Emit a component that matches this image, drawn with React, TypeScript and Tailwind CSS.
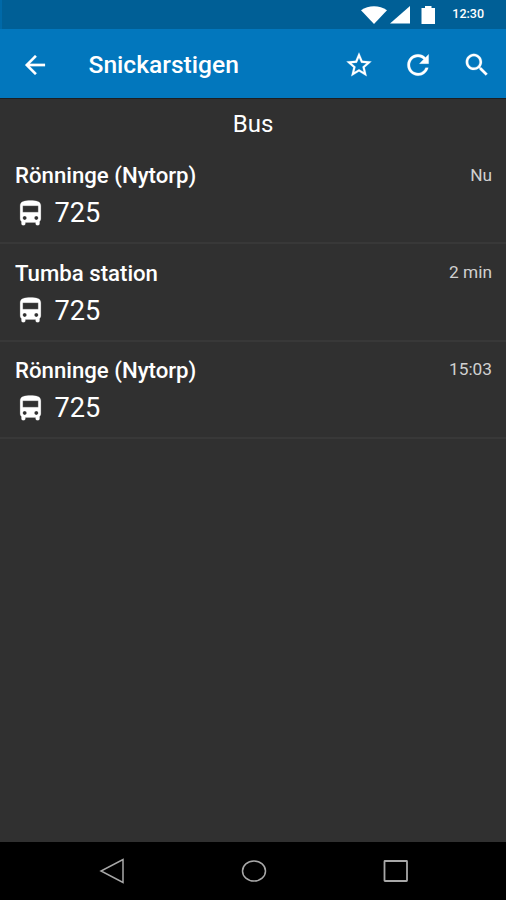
interface Departure {
  id: number;
  destination: string;
  line: string;
  time: string;
}

const departures: Departure[] = [
  { id: 1, destination: "Rönninge (Nytorp)", line: "725", time: "Nu" },
  { id: 2, destination: "Tumba station", line: "725", time: "2 min" },
  { id: 3, destination: "Rönninge (Nytorp)", line: "725", time: "15:03" },
];

const icons = {
  back: "M20 11H7.83l5.59-5.59L12 4l-8 8 8 8 1.41-1.41L7.83 13H20v-2z",
  star: "M22 9.24l-7.19-.62L12 2 9.19 8.63 2 9.24l5.46 4.73L5.82 21 12 17.27 18.18 21l-1.63-7.03L22 9.24zM12 15.4l-3.76 2.27 1-4.28-3.32-2.88 4.38-.38L12 6.1l1.71 4.04 4.38.38-3.32 2.88 1 4.28L12 15.4z",
  refresh:
    "M17.65 6.35C16.2 4.9 14.21 4 12 4c-4.42 0-7.99 3.58-7.99 8s3.57 8 7.99 8c3.73 0 6.84-2.55 7.73-6h-2.08c-.82 2.33-3.04 4-5.65 4-3.31 0-6-2.69-6-6s2.69-6 6-6c1.66 0 3.14.69 4.22 1.78L13 11h7V4l-2.35 2.35z",
  search:
    "M15.5 14h-.79l-.28-.27C15.41 12.59 16 11.11 16 9.5 16 5.91 13.09 3 9.5 3S3 5.91 3 9.5 5.91 16 9.5 16c1.61 0 3.09-.59 4.23-1.57l.27.28v.79l5 4.99L20.49 19l-4.99-5zm-6 0C7.01 14 5 11.99 5 9.5S7.01 5 9.5 5 14 7.01 14 9.5 11.99 14 9.5 14z",
  bus: "M4 16c0 .88.39 1.67 1 2.22V20c0 .55.45 1 1 1h1c.55 0 1-.45 1-1v-1h8v1c0 .55.45 1 1 1h1c.55 0 1-.45 1-1v-1.78c.61-.55 1-1.34 1-2.22V6c0-3.5-3.58-4-8-4s-8 .5-8 4v10zm3.5 1c-.83 0-1.5-.67-1.5-1.5S6.67 14 7.5 14s1.5.67 1.5 1.5S8.33 17 7.5 17zm9 0c-.83 0-1.5-.67-1.5-1.5s.67-1.5 1.5-1.5 1.5.67 1.5 1.5-.67 1.5-1.5 1.5zm1.5-6H6V6h12v5z",
};

export default function App() {
  return (
    <div className="flex h-[900px] w-[506px] flex-col overflow-hidden bg-[#303030] font-['Roboto',sans-serif] text-white">
      <StatusBar />
      <AppBar title="Snickarstigen" />
      <main className="flex-1">
        <h2 className="flex h-[48px] items-center justify-center pt-[2px] text-[24px] leading-none">
          Bus
        </h2>
        <ul>
          {departures.map((d) => (
            <DepartureRow key={d.id} departure={d} />
          ))}
        </ul>
      </main>
      <NavigationBar />
    </div>
  );
}

function Icon({ name, className }: { name: keyof typeof icons; className: string }) {
  return (
    <svg
      viewBox="0 0 24 24"
      fill="currentColor"
      stroke="currentColor"
      strokeWidth="0.15"
      className={className}
    >
      <path d={icons[name]} />
    </svg>
  );
}

function StatusBar() {
  return (
    <div className="flex h-[29px] shrink-0 items-center justify-end border-l-2 border-[#0069a8] bg-[#005f96] pr-[22px]">
      <svg viewBox="0 0 76 18" fill="currentColor" className="mr-[15px] h-[18px] w-[76px]">
        {/* wifi */}
        <path d="M0 4.2C7.5-1 18.5-1 26 4.2L13 18z" />
        {/* signal */}
        <path d="M49 0v17.5H29z" />
        {/* battery */}
        <path d="M60.5 2H64V0h6.5v2H74v16H60.5z" />
      </svg>
      <span className="text-[12.5px] font-medium leading-none">12:30</span>
    </div>
  );
}

function AppBar({ title }: { title: string }) {
  return (
    <header className="flex h-[70px] shrink-0 items-center border-b border-[#1c1f22] bg-[#0277bd] pl-5 pr-[14px] pt-[2px]">
      <button type="button" aria-label="Back">
        <Icon name="back" className="size-[30px]" />
      </button>
      <h1 className="ml-[38.5px] flex-1 pt-[2px] text-[24.6px] font-medium leading-none">
        {title}
      </h1>
      <div className="flex items-center gap-[28px]">
        <button type="button" aria-label="Favorite">
          <Icon name="star" className="size-[30px]" />
        </button>
        <button type="button" aria-label="Refresh">
          <Icon name="refresh" className="size-[32px]" />
        </button>
        <button type="button" aria-label="Search">
          <Icon name="search" className="size-[30px]" />
        </button>
      </div>
    </header>
  );
}

function DepartureRow({ departure }: { departure: Departure }) {
  return (
    <li className="h-[97.4px] border-b-2 border-[#383838] pl-[15px] pr-[14px] pt-[15.3px]">
      <div className="flex h-[26px] items-center justify-between">
        <span className="text-[22.2px] font-medium leading-none">{departure.destination}</span>
        <span className="text-[17.3px] leading-none text-[#d0d0d0]">{departure.time}</span>
      </div>
      <div className="mt-[8px] flex h-[34px] items-center">
        <Icon name="bus" className="size-[31px]" />
        <span className="ml-[8.5px] pt-[1.4px] text-[27.2px] leading-none">{departure.line}</span>
      </div>
    </li>
  );
}

function NavigationBar() {
  return (
    <nav className="flex h-[58px] shrink-0 items-center justify-between bg-black pl-[99px] pr-[97px]">
      <svg viewBox="0 0 26 26" fill="none" stroke="#a8a8a8" strokeWidth="1.5" className="size-[26px]">
        <path d="M24 1.5v23L2 13z" />
      </svg>
      <svg viewBox="0 0 26 26" fill="none" stroke="#a8a8a8" strokeWidth="1.5" className="size-[26px]">
        <ellipse cx="13" cy="13" rx="11.5" ry="10" />
      </svg>
      <svg viewBox="0 0 26 26" fill="none" stroke="#a8a8a8" strokeWidth="1.8" className="size-[26px]">
        <rect x="1.5" y="3" width="22.5" height="20" rx="0.5" />
      </svg>
    </nav>
  );
}
